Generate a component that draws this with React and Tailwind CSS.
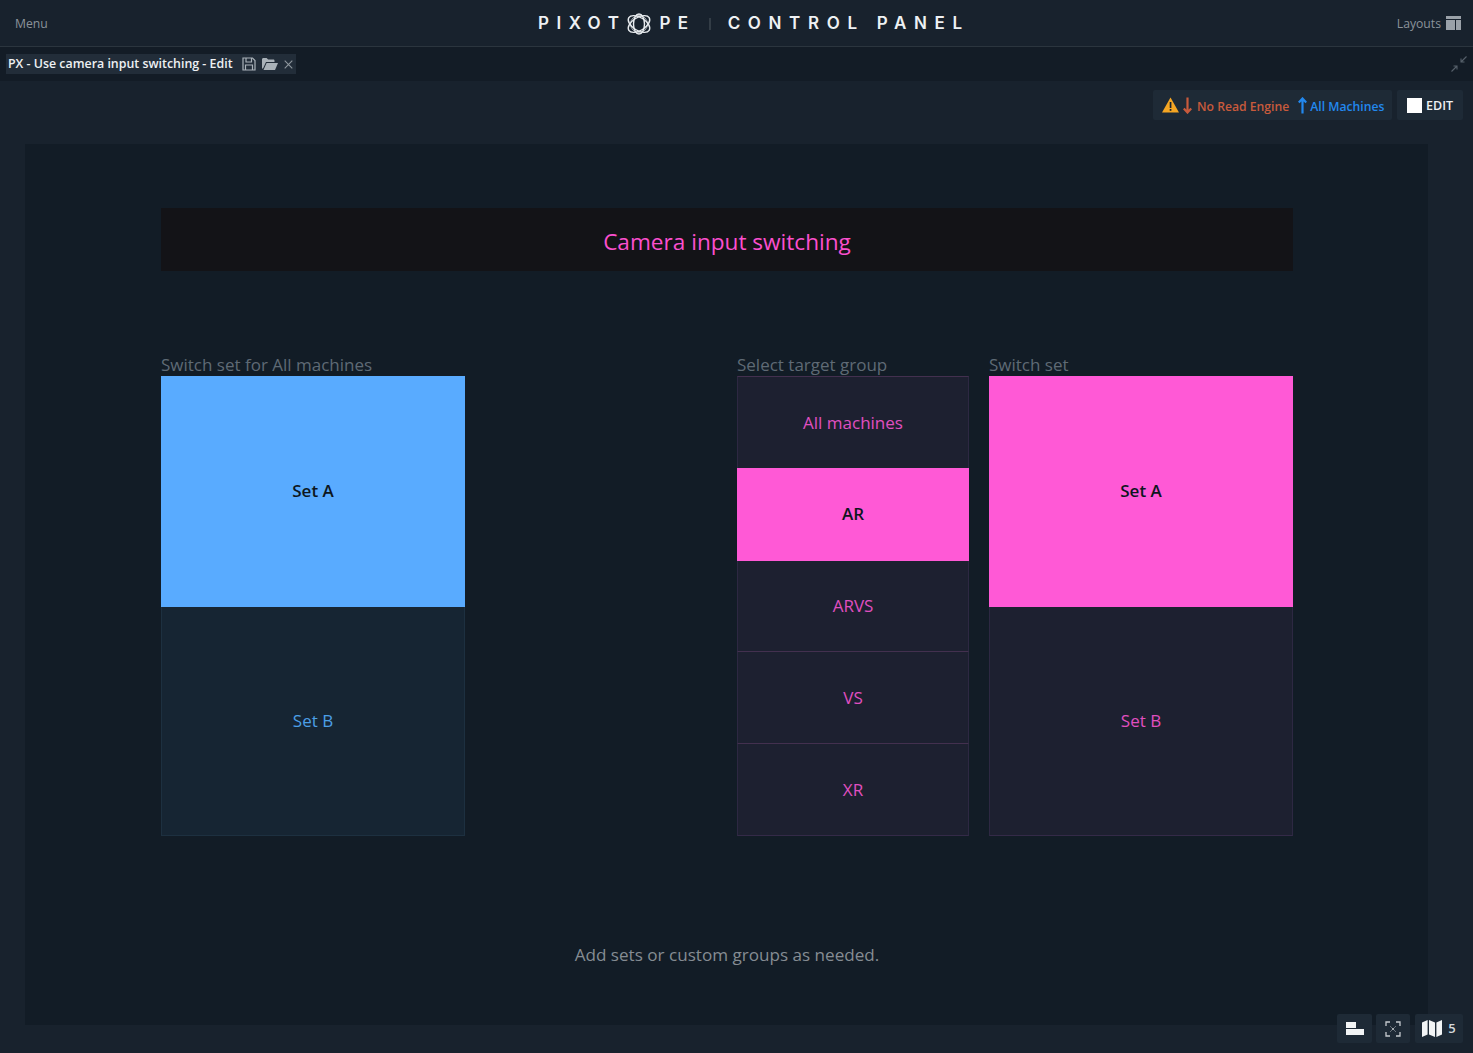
const font = { fontFamily: '"Open Sans", "Noto Sans", sans-serif' }

// Atom-like mark that replaces the "O" in the wordmark
function LogoMark() {
  return (
    <svg width="26" height="22" viewBox="0 0 26 22" fill="none" stroke="#e8ecef" strokeWidth="1.4">
      <ellipse cx="13" cy="11" rx="12" ry="6.5" transform="rotate(32 13 11)" />
      <ellipse cx="13" cy="11" rx="12" ry="6.5" transform="rotate(-32 13 11)" />
      <ellipse cx="13" cy="11" rx="5.5" ry="10" />
      <circle cx="13" cy="11" r="8.5" strokeWidth="0.7" />
    </svg>
  )
}

function SaveIcon() {
  return (
    <svg width="14" height="14" viewBox="0 0 14 14" fill="none" stroke="#aab2b9" strokeWidth="1.2">
      <path d="M1 1h9.5L13 3.5V13H1z" />
      <path d="M4 1v4h5.5V1M3.5 13V8h7v5" />
    </svg>
  )
}

function FolderIcon() {
  return (
    <svg width="16" height="12" viewBox="0 0 16 12" fill="#aab2b9">
      <path d="M0 1.5C0 .7.6 0 1.4 0h3.2l1.5 1.6h5.2c.7 0 1.2.5 1.2 1.2V4H4L1 10.5H0z" />
      <path d="M4.6 5H16l-3 7H1.5z" />
    </svg>
  )
}

function CloseIcon() {
  return (
    <svg width="9" height="9" viewBox="0 0 9 9" fill="none" stroke="#8f979e" strokeWidth="1.1">
      <path d="M.7.7l7.6 7.6M8.3.7.7 8.3" />
    </svg>
  )
}

function LayoutsIcon() {
  return (
    <svg width="15" height="14" viewBox="0 0 15 14" fill="#9aa1a8" className="-mt-[2px]">
      <rect x="0" y="0" width="15" height="3" />
      <rect x="0" y="4" width="9" height="10" />
      <rect x="10" y="4" width="5" height="10" />
    </svg>
  )
}

function ShrinkIcon() {
  return (
    <svg width="18" height="18" viewBox="0 0 18 18" fill="none" stroke="#56606a" strokeWidth="1.1">
      <path d="M16.5 1.5 11 7M11 3.5V7h3.5" />
      <path d="M1.5 16.5 7 11M3.5 11H7v3.5" />
    </svg>
  )
}

function WarningIcon() {
  return (
    <svg width="17" height="16" viewBox="0 0 17 16">
      <path d="M8.5 0.5 17 15.5H0z" fill="#f5a623" />
      <rect x="7.7" y="5" width="1.7" height="6" fill="#18222d" />
      <rect x="7.7" y="12" width="1.7" height="1.8" fill="#18222d" />
    </svg>
  )
}

function Arrow({ up, color }) {
  return (
    <svg width="9" height="17" viewBox="0 0 9 17" fill="none" stroke={color} strokeWidth="2.2" className={up ? '' : 'rotate-180'}>
      <path d="M4.5 16.5V1.5M.8 5.5l3.7-4 3.7 4" />
    </svg>
  )
}

function AlignIcon() {
  return (
    <svg width="18" height="13" viewBox="0 0 18 13" fill="#f2f4f5">
      <rect x="0" y="0" width="10" height="6" />
      <rect x="0" y="7" width="18" height="6" />
    </svg>
  )
}

function FocusIcon() {
  return (
    <svg width="16" height="16" viewBox="0 0 16 16" fill="none" stroke="#c5cace" strokeWidth="1.3">
      <path d="M1 5V1h4M11 1h4v4M15 11v4h-4M5 15H1v-4" />
      <circle cx="8" cy="8" r="1.1" fill="#c5cace" stroke="none" />
      <path d="M5.5 5.5l1 1M10.5 5.5l-1 1M5.5 10.5l1-1M10.5 10.5l-1-1" strokeWidth="0.9" />
    </svg>
  )
}

function MapIcon() {
  return (
    <svg width="20" height="17" viewBox="0 0 20 17" fill="#f2f4f5">
      <path d="M0 2.5 5.6 0v14.5L0 17z" />
      <path d="M7 0l6 2.5V17l-6-2.5z" />
      <path d="M14.4 2.5 20 0v14.5L14.4 17z" />
    </svg>
  )
}

function Tile({ label, active, height, theme, divider, last }) {
  const isBlue = theme === 'blue'
  let cls = isBlue
    ? 'bg-[#162533] text-[#4c9fe6] border-x border-[#1d3040]'
    : 'bg-[#1d2030] text-[#e04fc0] border-x border-[#2d2842]'
  if (active) cls = isBlue ? 'bg-[#59abff] text-[#0d1620] font-semibold pb-[1px]' : 'bg-[#ff59d6] text-[#0d1620] font-semibold pb-[1px]'
  const bottom = last ? (isBlue ? 'border-b border-b-[#1d3040]' : 'border-b border-b-[#342a48]') : ''
  return (
    <div className={`flex items-center justify-center text-[17px] ${cls} ${bottom} ${divider ? 'border-t border-t-[#43304f]' : ''}`} style={{ height }}>
      {label}
    </div>
  )
}

function Column({ title, width, theme, items }) {
  return (
    <div className="shrink-0" style={{ width }}>
      <div className="h-5 text-[17px] leading-[18px] text-[#5f6a75] whitespace-nowrap">{title}</div>
      {items.map((item) => (
        <Tile key={item.label} theme={theme} {...item} />
      ))}
    </div>
  )
}

export default function App() {
  return (
    <div style={font} className="relative flex h-[1053px] w-[1473px] flex-col overflow-hidden bg-[#18222d]">
      <header className="flex h-[47px] shrink-0 items-center justify-between border-b border-[#2b353e] pl-[15px] pr-[12px] pt-[2px] text-[12.2px] text-[#8b939b]">
        <span>Menu</span>
        <div className="absolute left-[538px] top-0 flex h-[46px] items-center pt-[1px] text-[17px] font-semibold text-[#eef1f3]" style={{ fontFamily: 'Inter, sans-serif' }}>
          <span className="tracking-[7.5px]">PIXOT</span>
          <LogoMark />
          <span className="ml-[7px] tracking-[7.5px]">PE</span>
          <span className="ml-[13px] h-[12px] w-[2px] bg-[#333d46]" />
          <span className="ml-[17px] tracking-[7.65px]">CONTROL PANEL</span>
        </div>
        <div className="flex items-center gap-[5px]">
          <span>Layouts</span>
          <LayoutsIcon />
        </div>
      </header>

      <div className="flex h-[34px] shrink-0 items-center justify-between bg-[#131c26] pl-[6px] pr-[5px]">
        <div className="flex h-[20px] w-[290px] items-center gap-[9px] bg-[#222d39] pl-[2px] text-[12.4px] font-semibold text-[#eef1f3] whitespace-nowrap">
          <span>PX - Use camera input switching - Edit</span>
          <span className="flex items-center gap-[6px]">
            <SaveIcon />
            <FolderIcon />
            <CloseIcon />
          </span>
        </div>
        <ShrinkIcon />
      </div>

      <div className="flex h-[63px] shrink-0 items-start justify-end gap-[5px] pt-[9px] pr-[10px]">
        <div className="flex h-[30px] w-[239px] items-center rounded-[2px] bg-[#1e2a36] pl-[9px] text-[12.2px] font-semibold whitespace-nowrap">
          <WarningIcon />
          <span className="ml-[4px]"><Arrow color="#c85a3c" /></span>
          <span className="ml-[5px] pt-[4px] text-[#c85a3c]">No Read Engine</span>
          <span className="ml-[9px]"><Arrow up color="#2288ee" /></span>
          <span className="ml-[3px] pt-[4px] text-[#2288ee]">All Machines</span>
        </div>
        <div className="flex h-[30px] w-[66px] items-center gap-[4px] rounded-[2px] bg-[#1e2a36] pl-[10px] text-[12.5px] font-semibold text-[#eef1f3]">
          <span className="h-[15px] w-[15px] bg-white" />
          <span className="pt-[2px]">EDIT</span>
        </div>
      </div>

      <main className="ml-[25px] h-[881px] w-[1403px] shrink-0 bg-[#121c26] pl-[136px] pr-[135px] pt-[64px]">
        <div className="flex h-[63px] items-center justify-center bg-[#131317] pt-[5px] text-[22.6px] text-[#fb4fce]">
          Camera input switching
        </div>

        <div className="mt-[85px] flex">
          <Column
            title="Switch set for All machines"
            width={304}
            theme="blue"
            items={[
              { label: 'Set A', active: true, height: 231 },
              { label: 'Set B', height: 229, last: true },
            ]}
          />
          <div className="ml-[272px]">
            <Column
              title="Select target group"
              width={232}
              theme="pink"
              items={[
                { label: 'All machines', height: 92, divider: true },
                { label: 'AR', active: true, height: 93 },
                { label: 'ARVS', height: 90 },
                { label: 'VS', height: 92, divider: true },
                { label: 'XR', height: 93, divider: true, last: true },
              ]}
            />
          </div>
          <div className="ml-[20px]">
            <Column
              title="Switch set"
              width={304}
              theme="pink"
              items={[
                { label: 'Set A', active: true, height: 231 },
                { label: 'Set B', height: 229, last: true },
              ]}
            />
          </div>
        </div>

        <p className="mt-[106px] text-center text-[17.1px] text-[#858c93]">Add sets or custom groups as needed.</p>
      </main>

      <div className="absolute bottom-[10px] right-[10px] flex">
        <div className="flex h-[29px] w-[35px] items-center justify-center rounded-[2px] bg-[#1e2a36]">
          <AlignIcon />
        </div>
        <div className="ml-[4px] flex h-[29px] w-[34px] items-center justify-center rounded-[2px] bg-[#1e2a36]">
          <FocusIcon />
        </div>
        <div className="ml-[5px] flex h-[29px] w-[48px] items-center justify-center gap-[6px] rounded-[2px] bg-[#1e2a36] text-[13px] font-semibold text-[#d5d9dc]">
          <MapIcon />
          5
        </div>
      </div>
    </div>
  )
}
